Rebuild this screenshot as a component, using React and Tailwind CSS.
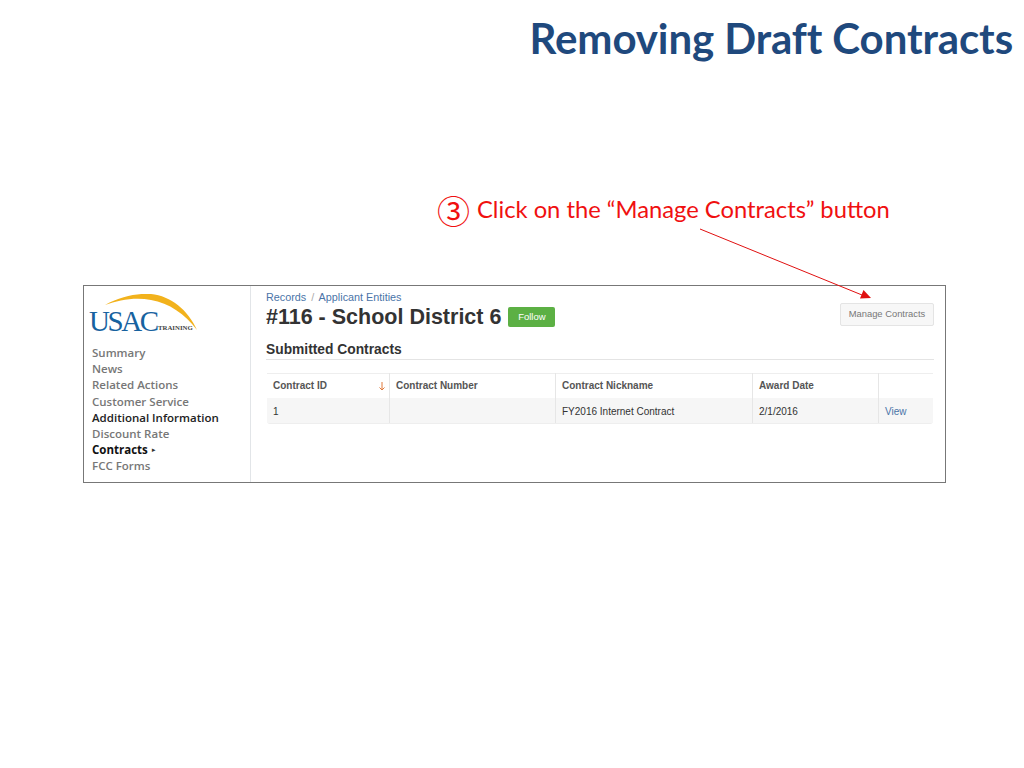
import React from 'react';

const nav = [
  { label: 'Summary' },
  { label: 'News' },
  { label: 'Related Actions' },
  { label: 'Customer Service' },
  { label: 'Additional Information', dark: true },
  { label: 'Discount Rate' },
  { label: 'Contracts', dark: true, active: true },
  { label: 'FCC Forms' },
];

const cols = [
  { label: 'Contract ID', cell: '1', w: 'w-[122px]', sort: true },
  { label: 'Contract Number', cell: '', w: 'w-[166px]' },
  { label: 'Contract Nickname', cell: 'FY2016 Internet Contract', w: 'w-[197px]' },
  { label: 'Award Date', cell: '2/1/2016', w: 'w-[126px]' },
  { label: '', cell: 'View', w: 'flex-1', link: true },
];

function Logo() {
  return (
    <div className="relative ml-[-1px] h-[42px] w-[112px]">
      <svg className="absolute left-0 top-0" width="112" height="42" viewBox="0 0 112 42">
        <path d="M14 11C30 2 48 -1 60 0C80 2 97 16 106 36C94 20 78 9 60 6C44 3 28 6 14 11Z" fill="#f2b21c" />
      </svg>
      <span className="absolute left-[-2px] top-[10px] font-['Liberation_Serif',serif] text-[29px] leading-[34px] tracking-[-2.4px] text-[#17629f]">USAC</span>
      <span className="absolute left-[67px] top-[29px] font-['Liberation_Serif',serif] text-[6.8px] font-bold leading-[10px] text-[#444]">TRAINING</span>
    </div>
  );
}

function Sidebar() {
  return (
    <div className="w-[167px] shrink-0 border-r border-[#e2e5e8] pl-[8px] pt-[8px] font-['Open_Sans',sans-serif]">
      <Logo />
      <ul className="mt-[9px] text-[11.5px] font-semibold leading-[16.2px]">
        {nav.map(n => (
          <li key={n.label} className={`flex items-center whitespace-nowrap ${n.active ? 'font-bold text-[#111]' : n.dark ? 'text-[#222]' : 'text-[#777]'}`}>
            {n.label}
            {n.active && <span className="ml-[3px] text-[6px] text-[#333]">►</span>}
          </li>
        ))}
      </ul>
    </div>
  );
}

function ContractsTable() {
  return (
    <div className="mt-[13px] ml-[1px] flex w-[666px] rounded-[3px] border-b border-[#eeeeee] text-[10px]">
      {cols.map((c, i) => (
        <div key={i} className={`${c.w} ${i > 0 ? 'border-l border-[#e6e6e6]' : ''}`}>
          <div className="relative h-[25px] border-t border-[#eeeeee] bg-white px-[6px] font-bold leading-[23px] text-[#555]">
            {c.label}
            {c.sort && (
              <svg className="absolute right-[3px] top-[7px]" width="8" height="10" viewBox="0 0 8 10" fill="none" stroke="#e0793a" strokeWidth="1">
                <path d="M4 1V9M1.5 6.5L4 9L6.5 6.5" />
              </svg>
            )}
          </div>
          <div className={`h-[25px] bg-[#f6f6f6] px-[6px] leading-[27px] ${c.link ? 'text-[#4a74a8]' : 'text-[#333]'}`}>{c.cell}</div>
        </div>
      ))}
    </div>
  );
}

export default function App() {
  return (
    <div className="relative h-[768px] w-[1024px] overflow-hidden bg-white">
      <div className="flex justify-end pr-[11px] pt-[13px]">
        <h1 className="font-['Lato',sans-serif] text-[42px] font-bold leading-[50px] tracking-[-0.1px] text-[#1f497d]">Removing Draft Contracts</h1>
      </div>

      <div className="ml-[437px] mt-[129px] flex h-[36px] items-center font-['Lato',sans-serif] text-[#f01010]">
        <span className="mr-[7px] font-['Noto_Sans_CJK_JP',sans-serif] text-[33px] leading-[36px]">③</span>
        <span className="text-[23.75px]">Click on the “Manage Contracts” button</span>
      </div>

      <div className="ml-[83px] mt-[57px] flex h-[198px] w-[863px] border border-[#777777] font-['Liberation_Sans',sans-serif]">
        <Sidebar />
        <div className="flex-1 pl-[15px] pr-[11px] pt-[4px]">
          <div className="flex items-start justify-between">
            <div>
              <div className="text-[10.8px] leading-[15px] text-[#4a74a8]">
                Records <span className="mx-[2px] text-[#aaa]">/</span> Applicant Entities
              </div>
              <div className="flex items-center">
                <h2 className="text-[21.5px] font-bold leading-[24px] text-[#333]">#116 - School District 6</h2>
                <span className="ml-[7px] flex h-[20px] w-[47px] items-center justify-center rounded-[2px] bg-[#5cb044] text-[9.5px] text-white">Follow</span>
              </div>
            </div>
            <button className="mt-[13px] h-[23px] w-[94px] rounded-[2px] border border-[#e4e4e4] bg-[#f7f7f7] text-[9.4px] text-[#777]">Manage Contracts</button>
          </div>
          <h3 className="mt-[12px] border-b border-[#e4e4e4] text-[13.8px] font-bold leading-[18px] text-[#333]">Submitted Contracts</h3>
          <ContractsTable />
        </div>
      </div>

      {/* callout arrow */}
      <svg className="absolute left-0 top-0" width="1024" height="768" fill="none">
        <path d="M700 229L862 295" stroke="#e01010" strokeWidth="1" />
        <path d="M871 298L860 298.5L863.5 290Z" fill="#e01010" />
      </svg>
    </div>
  );
}
